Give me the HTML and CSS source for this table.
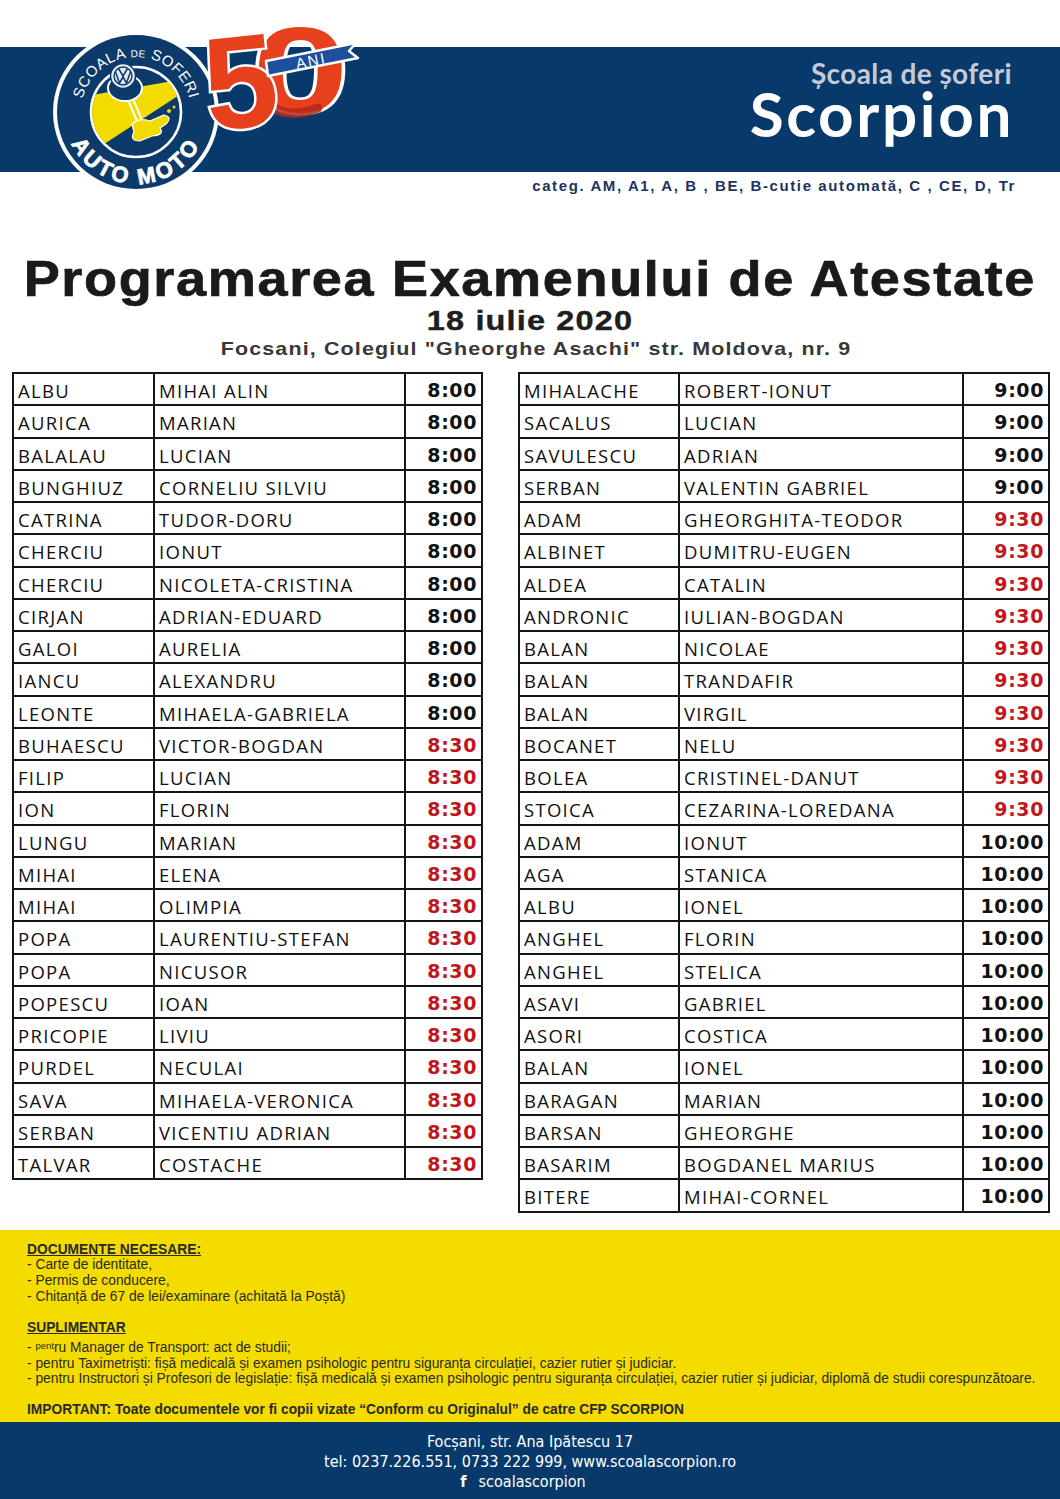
FILE: index.html
```html
<!DOCTYPE html>
<html lang="ro">
<head>
<meta charset="utf-8">
<title>Programarea Examenului de Atestate</title>
<link rel="stylesheet" href="styles.css">
</head>
<body>
<div class="page">
  <header class="masthead">
    <div class="band">
      <div class="tag">Școala de șoferi</div>
      <div class="brand">Scorpion</div>
    </div>
    <div class="categ">categ. AM, A1, A, B , BE, B-cutie automată, C , CE, D, Tr</div>
    <svg class="logo" viewBox="0 0 380 210" width="380" height="210" aria-label="Scoala de soferi Auto Moto 50 ani">
      <defs>
        <clipPath id="innerClip"><circle cx="136" cy="112" r="44"/></clipPath>
        <path id="arcTop" d="M 81 112 A 55 55 0 0 1 191 112"/>
        <path id="arcBot" d="M 64 112 A 72 72 0 0 0 208 112"/>
      </defs>
      <ellipse cx="136" cy="112" rx="83" ry="81" fill="#ffffff"/>
      <ellipse cx="136" cy="112" rx="79" ry="77" fill="#0b3a6b"/>
      <circle cx="136" cy="112" r="45" fill="#0b3a6b" stroke="#ffffff" stroke-width="2.5"/>
      <g clip-path="url(#innerClip)">
        <polygon points="80,97 190,78 190,88 95,150 80,150" fill="#f2dc00"/>
      </g>
      <path d="M 129 96 L 141 124" stroke="#ffffff" stroke-width="7" stroke-linecap="round"/>
      <path d="M 129 96 L 141 124" stroke="#f2dc00" stroke-width="3" stroke-linecap="round"/>
      <path d="M 132 124 Q 140 117 150 121 L 164 115 Q 173 117 166 124 L 160 128 Q 165 135 152 136 L 140 141 Q 129 141 134 132 Z" fill="#f2dc00" stroke="#ffffff" stroke-width="1.2"/>
      <circle cx="169" cy="111" r="2" fill="#f2dc00"/>
      <circle cx="174" cy="107" r="1.5" fill="#f2dc00"/>
      <ellipse cx="125" cy="88" rx="17" ry="13" fill="#0b3a6b" stroke="#ffffff" stroke-width="2"/>
      <circle cx="123" cy="76" r="12.5" fill="#e4e8ef" stroke="#0b3a6b" stroke-width="1.5"/>
      <circle cx="123" cy="76" r="9" fill="none" stroke="#0b3a6b" stroke-width="1.4"/>
      <polyline points="118.5,68.5 123,76 127.5,68.5" fill="none" stroke="#0b3a6b" stroke-width="1.5"/>
      <polyline points="115.5,72 119.5,83 123,77 126.5,83 130.5,72" fill="none" stroke="#0b3a6b" stroke-width="1.5"/>
      <text class="ring-top"><textPath href="#arcTop" startOffset="50%" text-anchor="middle">SCOALA <tspan font-size="10">DE</tspan> SOFERI</textPath></text>
      <text class="ring-bot"><textPath href="#arcBot" startOffset="50%" text-anchor="middle">AUTO MOTO</textPath></text>
      <text class="fifty" x="0" y="0" transform="translate(252 112) scale(1.45 1)">0</text>
      <path d="M 262 98 Q 282 122 318 108" fill="none" stroke="#b3281a" stroke-width="9" stroke-linecap="round" opacity="0.85"/>
      <text class="fifty five" x="203" y="127" transform="rotate(-6 245 75)">5</text>
      <polygon points="266,61 356,43 349,51 358,58 268,76" fill="#1d4f9d" stroke="#ffffff" stroke-width="2.5" stroke-linejoin="round"/>
      <text class="ani" x="311" y="66" transform="rotate(-11.3 311 60)">ANI</text>
    </svg>
  </header>

  <h1 class="title"><span>Programarea Examenului de Atestate</span></h1>
  <p class="date"><span>18 iulie 2020</span></p>
  <p class="place"><span>Focsani, Colegiul "Gheorghe Asachi" str. Moldova, nr. 9</span></p>

  <main class="lists">
    <table class="sched left">
      <colgroup><col class="c1"><col class="c2"><col class="c3"></colgroup>
      <tbody>
        <tr><td>ALBU</td><td>MIHAI ALIN</td><td class="t">8:00</td></tr>
        <tr><td>AURICA</td><td>MARIAN</td><td class="t">8:00</td></tr>
        <tr><td>BALALAU</td><td>LUCIAN</td><td class="t">8:00</td></tr>
        <tr><td>BUNGHIUZ</td><td>CORNELIU SILVIU</td><td class="t">8:00</td></tr>
        <tr><td>CATRINA</td><td>TUDOR-DORU</td><td class="t">8:00</td></tr>
        <tr><td>CHERCIU</td><td>IONUT</td><td class="t">8:00</td></tr>
        <tr><td>CHERCIU</td><td>NICOLETA-CRISTINA</td><td class="t">8:00</td></tr>
        <tr><td>CIRJAN</td><td>ADRIAN-EDUARD</td><td class="t">8:00</td></tr>
        <tr><td>GALOI</td><td>AURELIA</td><td class="t">8:00</td></tr>
        <tr><td>IANCU</td><td>ALEXANDRU</td><td class="t">8:00</td></tr>
        <tr><td>LEONTE</td><td>MIHAELA-GABRIELA</td><td class="t">8:00</td></tr>
        <tr><td>BUHAESCU</td><td>VICTOR-BOGDAN</td><td class="t red">8:30</td></tr>
        <tr><td>FILIP</td><td>LUCIAN</td><td class="t red">8:30</td></tr>
        <tr><td>ION</td><td>FLORIN</td><td class="t red">8:30</td></tr>
        <tr><td>LUNGU</td><td>MARIAN</td><td class="t red">8:30</td></tr>
        <tr><td>MIHAI</td><td>ELENA</td><td class="t red">8:30</td></tr>
        <tr><td>MIHAI</td><td>OLIMPIA</td><td class="t red">8:30</td></tr>
        <tr><td>POPA</td><td>LAURENTIU-STEFAN</td><td class="t red">8:30</td></tr>
        <tr><td>POPA</td><td>NICUSOR</td><td class="t red">8:30</td></tr>
        <tr><td>POPESCU</td><td>IOAN</td><td class="t red">8:30</td></tr>
        <tr><td>PRICOPIE</td><td>LIVIU</td><td class="t red">8:30</td></tr>
        <tr><td>PURDEL</td><td>NECULAI</td><td class="t red">8:30</td></tr>
        <tr><td>SAVA</td><td>MIHAELA-VERONICA</td><td class="t red">8:30</td></tr>
        <tr><td>SERBAN</td><td>VICENTIU ADRIAN</td><td class="t red">8:30</td></tr>
        <tr><td>TALVAR</td><td>COSTACHE</td><td class="t red">8:30</td></tr>
      </tbody>
    </table>
    <table class="sched right">
      <colgroup><col class="c1"><col class="c2"><col class="c3"></colgroup>
      <tbody>
        <tr><td>MIHALACHE</td><td>ROBERT-IONUT</td><td class="t">9:00</td></tr>
        <tr><td>SACALUS</td><td>LUCIAN</td><td class="t">9:00</td></tr>
        <tr><td>SAVULESCU</td><td>ADRIAN</td><td class="t">9:00</td></tr>
        <tr><td>SERBAN</td><td>VALENTIN GABRIEL</td><td class="t">9:00</td></tr>
        <tr><td>ADAM</td><td>GHEORGHITA-TEODOR</td><td class="t red">9:30</td></tr>
        <tr><td>ALBINET</td><td>DUMITRU-EUGEN</td><td class="t red">9:30</td></tr>
        <tr><td>ALDEA</td><td>CATALIN</td><td class="t red">9:30</td></tr>
        <tr><td>ANDRONIC</td><td>IULIAN-BOGDAN</td><td class="t red">9:30</td></tr>
        <tr><td>BALAN</td><td>NICOLAE</td><td class="t red">9:30</td></tr>
        <tr><td>BALAN</td><td>TRANDAFIR</td><td class="t red">9:30</td></tr>
        <tr><td>BALAN</td><td>VIRGIL</td><td class="t red">9:30</td></tr>
        <tr><td>BOCANET</td><td>NELU</td><td class="t red">9:30</td></tr>
        <tr><td>BOLEA</td><td>CRISTINEL-DANUT</td><td class="t red">9:30</td></tr>
        <tr><td>STOICA</td><td>CEZARINA-LOREDANA</td><td class="t red">9:30</td></tr>
        <tr><td>ADAM</td><td>IONUT</td><td class="t">10:00</td></tr>
        <tr><td>AGA</td><td>STANICA</td><td class="t">10:00</td></tr>
        <tr><td>ALBU</td><td>IONEL</td><td class="t">10:00</td></tr>
        <tr><td>ANGHEL</td><td>FLORIN</td><td class="t">10:00</td></tr>
        <tr><td>ANGHEL</td><td>STELICA</td><td class="t">10:00</td></tr>
        <tr><td>ASAVI</td><td>GABRIEL</td><td class="t">10:00</td></tr>
        <tr><td>ASORI</td><td>COSTICA</td><td class="t">10:00</td></tr>
        <tr><td>BALAN</td><td>IONEL</td><td class="t">10:00</td></tr>
        <tr><td>BARAGAN</td><td>MARIAN</td><td class="t">10:00</td></tr>
        <tr><td>BARSAN</td><td>GHEORGHE</td><td class="t">10:00</td></tr>
        <tr><td>BASARIM</td><td>BOGDANEL MARIUS</td><td class="t">10:00</td></tr>
        <tr><td>BITERE</td><td>MIHAI-CORNEL</td><td class="t">10:00</td></tr>
      </tbody>
    </table>
  </main>

  <section class="docs">
    <div class="grp">
      <p class="h">DOCUMENTE NECESARE:</p>
      <p>- Carte de identitate,</p>
      <p>- Permis de conducere,</p>
      <p>- Chitanță de 67 de lei/examinare (achitată la Poștă)</p>
    </div>
    <div class="grp">
      <p class="h">SUPLIMENTAR</p>
      <p class="first">- <span class="sup">pent</span>ru Manager de Transport: act de studii;</p>
      <p>- pentru Taximetriști: fișă medicală și examen psihologic pentru siguranța circulației, cazier rutier și judiciar.</p>
      <p>- pentru Instructori și Profesori de legislație: fișă medicală și examen psihologic pentru siguranța circulației, cazier rutier și judiciar, diplomă de studii corespunzătoare.</p>
    </div>
    <p class="imp">IMPORTANT: Toate documentele vor fi copii vizate “Conform cu Originalul” de catre CFP SCORPION</p>
  </section>

  <footer class="foot">
    <p>Focșani, str. Ana Ipătescu 17</p>
    <p>tel: 0237.226.551, 0733 222 999, www.scoalascorpion.ro</p>
    <p class="fbline"><span class="fb">f</span>scoalascorpion</p>
  </footer>
</div>
</body>
</html>
```

FILE: styles.css
```css
* { box-sizing: border-box; }
html, body { margin: 0; padding: 0; background: #ffffff; }
body { font-family: "Liberation Sans", Arial, sans-serif; color: #1b1b1b; }
.page { width: 1060px; }

/* masthead */
.masthead { position: relative; height: 200px; padding-top: 47px; }
.band {
  height: 125px;
  background: #073a6b;
  display: flex;
  flex-direction: column;
  align-items: flex-end;
  padding: 12px 48px 0 0;
}
.tag {
  font-family: Lato, "Open Sans", sans-serif;
  font-weight: 700;
  font-size: 28px;
  line-height: 28px;
  color: #c5cad6;
  letter-spacing: 0.4px;
}
.brand {
  font-family: Lato, "Open Sans", sans-serif;
  font-weight: 700;
  font-size: 62px;
  line-height: 52px;
  color: #ffffff;
  letter-spacing: 2.6px;
  margin-right: -2px;
}
.categ {
  margin: 6px 44px 0 0;
  text-align: right;
  font-weight: 700;
  font-size: 15px;
  line-height: 16px;
  color: #1c3360;
  letter-spacing: 1.6px;
}
.logo { position: absolute; left: 0; top: 0; }
.ring-top { font-family: "Liberation Sans", sans-serif; font-size: 15px; fill: #ffffff; letter-spacing: 0.5px; }
.ring-bot { font-family: "Liberation Sans", sans-serif; font-weight: 700; font-size: 22px; fill: #ffffff; stroke: #ffffff; stroke-width: 0.8px; letter-spacing: 3px; }
.fifty { font-family: "Liberation Sans", sans-serif; font-weight: 700; font-size: 120px; fill: #e6401d; stroke: #ffffff; stroke-width: 5px; paint-order: stroke; }
.fifty.five { font-size: 132px; }
.ani { font-family: "Liberation Sans", sans-serif; font-size: 15px; fill: #ffffff; letter-spacing: 2px; text-anchor: middle; }

/* headings */
.title, .date, .place { text-align: center; font-weight: 700; }
.title span, .date span, .place span { display: inline-block; white-space: nowrap; }
.title {
  margin: 54px 0 0;
  font-size: 50px;
  line-height: 50px;
  letter-spacing: 1.5px;
  color: #1a1a1a;
}
.title span { transform: scaleX(1.082); -webkit-text-stroke: 0.7px #1a1a1a; }
.date {
  margin: 3px 0 0;
  font-size: 28px;
  line-height: 28px;
  letter-spacing: 1px;
  color: #1e1e1e;
}
.date span { transform: scaleX(1.16); -webkit-text-stroke: 0.4px #1e1e1e; }
.place {
  margin: 5px 0 0;
  padding-left: 12px;
  font-size: 19px;
  line-height: 18px;
  letter-spacing: 1px;
  color: #383838;
}
.place span { transform: scaleX(1.13); }

/* tables */
.lists {
  display: flex;
  align-items: flex-start;
  gap: 35px;
  margin: 14px 0 0 12px;
}
.sched {
  border-collapse: collapse;
  table-layout: fixed;
  font-family: "Open Sans", sans-serif;
  font-size: 18.5px;
  color: #111111;
}
.sched td {
  border: 2px solid #151515;
  padding: 3px 4px 0;
  line-height: 27.25px;
  white-space: nowrap;
  overflow: hidden;
  letter-spacing: 1.3px;
}
.sched td.t {
  text-align: right;
  font-family: "DejaVu Sans", sans-serif;
  font-weight: 700;
  font-size: 19px;
  letter-spacing: 0.6px;
  padding-right: 4px;
}
.sched td.red { color: #c3161c; }
.left { width: 469px; }
.left .c1 { width: 141px; }
.left .c2 { width: 251px; }
.left .c3 { width: 77px; }
.right { width: 530px; }
.right .c1 { width: 160px; }
.right .c2 { width: 284px; }
.right .c3 { width: 86px; }

/* documents */
.docs {
  margin-top: 17px;
  background: #f4dc00;
  height: 192px;
  padding: 12px 27px 0;
  font-family: "Liberation Sans Narrow", "Liberation Sans", sans-serif;
  font-size: 13.8px;
  line-height: 15.7px;
  color: #2a2a2a;
}
.docs p { margin: 0; white-space: nowrap; }
.docs .h { font-weight: 700; text-decoration: underline; }
.docs .grp + .grp { margin-top: 16px; }
.docs .first { margin-top: 2px; }
.docs .sup { font-size: 9.5px; vertical-align: 3px; }
.docs .imp { font-weight: 700; margin-top: 15px; }

/* footer */
.foot {
  background: #073a6b;
  height: 78px;
  padding-top: 10px;
  text-align: center;
  color: #ffffff;
  font-family: "Liberation Sans Narrow", "DejaVu Sans Condensed", sans-serif;
  font-size: 16px;
  line-height: 20px;
}
.foot p { margin: 0; }
.foot .fbline { padding-right: 14px; }
.foot .fb { font-weight: 700; margin-right: 12px; }
```
